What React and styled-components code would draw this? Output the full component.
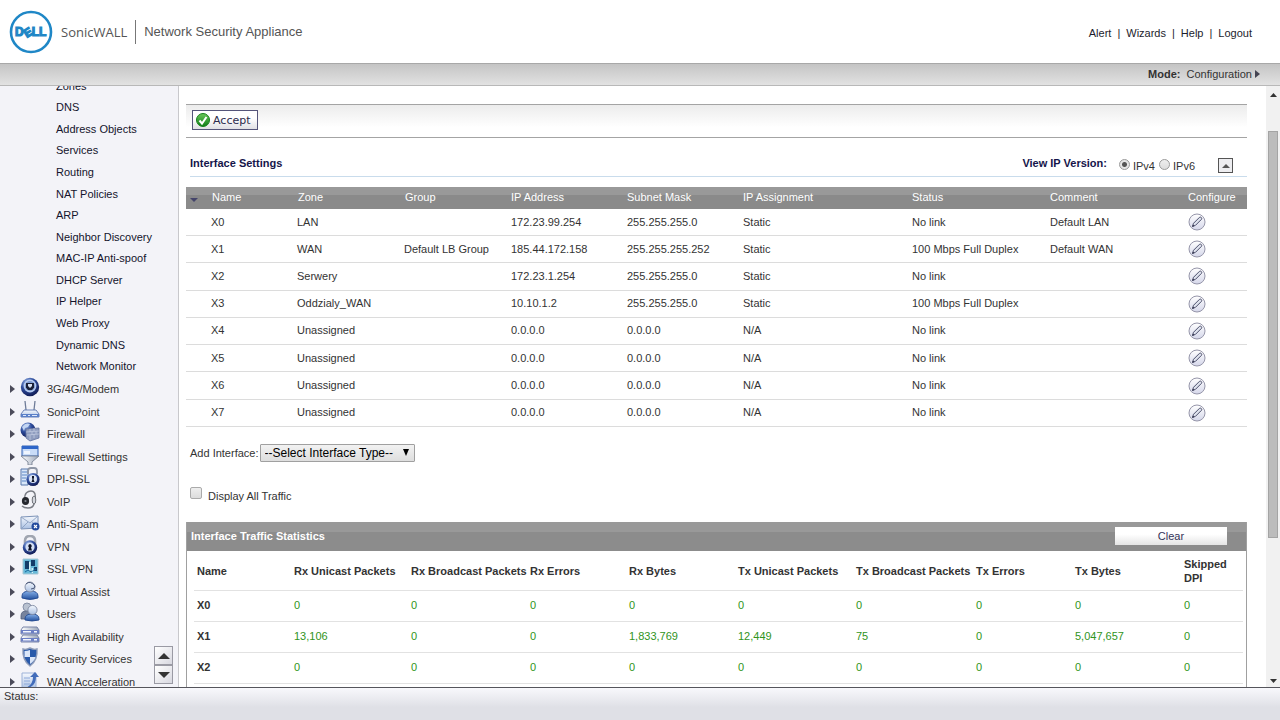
import React from 'react';
import styled, { createGlobalStyle } from 'styled-components';

const subItems = [
  'Zones', 'DNS', 'Address Objects', 'Services', 'Routing', 'NAT Policies', 'ARP',
  'Neighbor Discovery', 'MAC-IP Anti-spoof', 'DHCP Server', 'IP Helper', 'Web Proxy',
  'Dynamic DNS', 'Network Monitor',
];

const icons = {
  camera: (
    <>
      <circle cx="10" cy="10" r="9.2" fill="url(#navy)" />
      <circle cx="10" cy="9" r="6.4" fill="#b9cdf0" />
      <circle cx="10" cy="9" r="5" fill="#7f9bd2" />
      <path d="M6 6h8v4.5l-2 2.5H8l-2-2.5z" fill="#1a2038" />
      <path d="M8 7h4v2l-2 2-2-2z" fill="#d5dff2" />
    </>
  ),
  router: (
    <>
      <path d="M6 10L5 1M14 10l1-9" stroke="#6f7c98" strokeWidth="1.3" />
      <path d="M4 10h12l3 4v3H1v-3z" fill="url(#pale)" stroke="#5c76b0" strokeWidth=".9" />
      <path d="M1 14h18v3H1z" fill="#5b80c8" />
      <path d="M3 15.5h3M8 15.5h2M12 15.5h5" stroke="#dfe9fb" />
    </>
  ),
  firewall: (
    <>
      <circle cx="8" cy="8" r="7.5" fill="url(#navy)" />
      <path d="M2 5c3-4 6-4 8-3l-2 3-3 1-1 3z" fill="#c4d6f3" />
      <path d="M6 7l13-1v10l-9 3-4-3z" fill="#8f9dbf" stroke="#6673a0" strokeWidth=".8" />
      <path d="M6 10l13-1M7 13l12-1M10 7v3M14 6v3M12 10v3M16 9v3M10 13v5M14 12v4" stroke="#c4cde2" strokeWidth=".7" />
    </>
  ),
  funnel: (
    <>
      <path d="M2 1h16v10H2z" fill="#c9dcf8" stroke="#3263b5" />
      <path d="M2 1h16v3H2z" fill="#2e66c9" />
      <path d="M4 6h6v3H4z" fill="#eff5fe" />
      <path d="M1 11h18l-7 6v3H8v-3z" fill="url(#silver)" stroke="#7b8495" strokeWidth=".9" />
    </>
  ),
  dpi: (
    <>
      <path d="M1 2h7v16H1z" fill="#d8e6f8" stroke="#5878ad" />
      <path d="M2 5h5M2 8h5M2 11h4M2 14h4" stroke="#5b86c6" />
      <path d="M8 7V4q0-3 3-3h3q3 0 3 3v3" fill="none" stroke="#8e96a6" strokeWidth="1.8" />
      <circle cx="13" cy="12.5" r="6.6" fill="url(#navy)" />
      <circle cx="13" cy="12" r="4" fill="#dce5f5" />
      <path d="M12 9h2v2l-.5 1 1 3h-3l1-3-.5-1z" fill="#111629" />
    </>
  ),
  headset: (
    <>
      <path d="M5 9C4 3 8 1 11 1c4 0 5 4 4 9l-1 4q-1 4-6 4-4 0-6-2" fill="none" stroke="#7a7d85" strokeWidth="1.4" />
      <ellipse cx="5.5" cy="11" rx="3.6" ry="4" fill="#25272e" />
      <ellipse cx="14" cy="10" rx="1.8" ry="4" fill="#d3d6dd" stroke="#555960" strokeWidth=".8" />
      <circle cx="5.5" cy="11" r="1.1" fill="#81868f" />
    </>
  ),
  mail: (
    <>
      <path d="M1 5l17-1v12l-17 1z" fill="url(#pale)" stroke="#7d93b8" />
      <path d="M1 5l9 6 8-7M1 17l7-7M18 15l-6-5" fill="none" stroke="#8ca0c2" strokeWidth=".9" />
      <circle cx="15.5" cy="14.5" r="4" fill="#244b9d" />
      <path d="M14 13l3 3m0-3l-3 3" stroke="#fff" strokeWidth="1.1" />
    </>
  ),
  lock: (
    <>
      <path d="M5 9V6q0-5 5-5t5 5v3" fill="none" stroke="#a0a5b0" strokeWidth="2.6" />
      <circle cx="10" cy="12.5" r="7.2" fill="url(#navy)" />
      <circle cx="10" cy="12" r="4.6" fill="#d4dff4" />
      <path d="M10 9a2 2 0 0 1 1 3.5l1 3H8l1-3A2 2 0 0 1 10 9z" fill="#0d1226" />
    </>
  ),
  ssl: (
    <>
      <path d="M3 2h15v15H3z" fill="#65b8d8" stroke="#a9c8d5" />
      <path d="M5 4h4v8H5zM11 3h4v6h-4zM14 10h3v4h-3z" fill="#123c69" />
      <path d="M9 5h1.5v9H9zM11.5 11H13v5h-1.5z" fill="#d1f0f7" />
      <path d="M5 15l3-2 3 2 5-3" fill="none" stroke="#1c6b9b" />
    </>
  ),
  assist: (
    <>
      <path d="M2 16q0-5 8-5t8 5v2q-8 3-16 0z" fill="url(#blue)" stroke="#234a91" strokeWidth=".9" />
      <circle cx="10" cy="7" r="5" fill="url(#pale)" stroke="#7e89a2" strokeWidth=".9" />
      <path d="M6 4q4-4 9 2M15 6q0 3-4 3" fill="none" stroke="#4b5878" />
    </>
  ),
  users: (
    <>
      <path d="M1 14q0-5 5-5t5 5v3H1z" fill="#77839d" stroke="#4f5c78" strokeWidth=".8" />
      <circle cx="7" cy="5" r="4" fill="#b8c1d0" stroke="#7e89a2" strokeWidth=".9" />
      <path d="M5 17q0-5 7-5t7 5v1q-7 2-14 0z" fill="url(#blue)" stroke="#234a91" strokeWidth=".9" />
      <circle cx="12.5" cy="8" r="4.6" fill="url(#pale)" stroke="#7e89a2" strokeWidth=".9" />
    </>
  ),
  servers: (
    <>
      <path d="M3 2h14l2 3v4H1V5zM3 10h14l2 3v4H1v-4z" fill="url(#silver)" stroke="#6d7ba2" strokeWidth=".9" />
      <path d="M1 5h18v3.5H1zM1 13h18v3.5H1z" fill="#6c7fc4" />
      <path d="M3 6.7h8M3 14.7h8M14 6.7h3M14 14.7h3" stroke="#f2f5fd" strokeWidth="1.6" />
    </>
  ),
  shield: (
    <>
      <path d="M10 1q4 2 7 1 1 11-7 17Q2 13 3 2q3 1 7-1z" fill="#2859aa" stroke="#8d9bb8" strokeWidth="1.4" />
      <path d="M10 3v7H4.500V4q3 0 5.500-1zM10 10h5.500q-1 4-5.500 7z" fill="#dbe6f8" />
    </>
  ),
  wan: (
    <>
      <path d="M2 3h14v16H2z" fill="url(#pale)" stroke="#9db2d8" />
      <path d="M4 8h6M4 11h6M4 14h6" stroke="#8ea9da" />
      <path d="M3 19q10-3 10-12h-3l5-5 4 5h-3q0 11-13 12z" fill="#426cba" />
    </>
  ),
};

const groups = [
  ['3G/4G/Modem', 'camera'], ['SonicPoint', 'router'], ['Firewall', 'firewall'],
  ['Firewall Settings', 'funnel'], ['DPI-SSL', 'dpi'], ['VoIP', 'headset'],
  ['Anti-Spam', 'mail'], ['VPN', 'lock'], ['SSL VPN', 'ssl'], ['Virtual Assist', 'assist'],
  ['Users', 'users'], ['High Availability', 'servers'], ['Security Services', 'shield'],
  ['WAN Acceleration', 'wan'],
];

const interfaceHeads = ['Name', 'Zone', 'Group', 'IP Address', 'Subnet Mask', 'IP Assignment', 'Status', 'Comment', 'Configure'];
const interfaceCols = [25, 86, 107, 107, 116, 116, 169, 138, 138, 59];
const interfaces = [
  ['X0', 'LAN', '', '172.23.99.254', '255.255.255.0', 'Static', 'No link', 'Default LAN'],
  ['X1', 'WAN', 'Default LB Group', '185.44.172.158', '255.255.255.252', 'Static', '100 Mbps Full Duplex', 'Default WAN'],
  ['X2', 'Serwery', '', '172.23.1.254', '255.255.255.0', 'Static', 'No link', ''],
  ['X3', 'Oddzialy_WAN', '', '10.10.1.2', '255.255.255.0', 'Static', '100 Mbps Full Duplex', ''],
  ['X4', 'Unassigned', '', '0.0.0.0', '0.0.0.0', 'N/A', 'No link', ''],
  ['X5', 'Unassigned', '', '0.0.0.0', '0.0.0.0', 'N/A', 'No link', ''],
  ['X6', 'Unassigned', '', '0.0.0.0', '0.0.0.0', 'N/A', 'No link', ''],
  ['X7', 'Unassigned', '', '0.0.0.0', '0.0.0.0', 'N/A', 'No link', ''],
];

const statHeads = ['Name', 'Rx Unicast Packets', 'Rx Broadcast Packets', 'Rx Errors', 'Rx Bytes', 'Tx Unicast Packets', 'Tx Broadcast Packets', 'Tx Errors', 'Tx Bytes', 'Skipped DPI'];
const statCols = [97, 117, 119, 99, 109, 118, 120, 99, 109, 62];
const stats = [
  ['X0', '0', '0', '0', '0', '0', '0', '0', '0', '0'],
  ['X1', '13,106', '0', '0', '1,833,769', '12,449', '75', '0', '5,047,657', '0'],
  ['X2', '0', '0', '0', '0', '0', '0', '0', '0', '0'],
];

const Arrow = ({ dir, width = 8, height = 5, color = '#333' }) => {
  const d = { up: 'M0 10L5 0l5 10z', down: 'M0 0h10L5 10z', right: 'M0 0l10 5-10 5z' }[dir];
  return (
    <svg width={width} height={height} viewBox="0 0 10 10" preserveAspectRatio="none" aria-hidden="true">
      <path d={d} fill={color} />
    </svg>
  );
};

const App = () => {
  return (
    <>
      <GlobalStyle />
      <Gradients />
      <Page>
        <Header>
          <Brand>
            <svg width="44" height="44" viewBox="0 0 44 44" role="img" aria-label="Dell">
              <circle cx="22" cy="22" r="20" fill="none" stroke="#1f87c6" strokeWidth="2.6" />
              <text x="6" y="26" dx="0 3 -3 0" dy="0 2 -2 0" rotate="0 -32 0 0" fontFamily="Liberation Sans, sans-serif" fontWeight="bold" fontSize="12" fill="#1f87c6" stroke="#1f87c6" strokeWidth="1.2">DELL</text>
            </svg>
            <BrandName>SonicWALL</BrandName>
            <Product>Network Security Appliance</Product>
          </Brand>
          <TopLinks>
            <a href="#alert">Alert</a><span>|</span>
            <a href="#wizards">Wizards</a><span>|</span>
            <a href="#help">Help</a><span>|</span>
            <a href="#logout">Logout</a>
          </TopLinks>
        </Header>
        <ModeBar>
          <b>Mode:</b>
          <a href="#mode">Configuration <Arrow dir="right" width={5} height={8} color="#444452" /></a>
        </ModeBar>
        <Body>
          <Sidebar>
            <SubList>
              {subItems.map((item) => <li key={item}><a href="#sub">{item}</a></li>)}
            </SubList>
            <GroupList>
              {groups.map(([name, icon]) => (
                <li key={name}>
                  <GroupLink href="#group">
                    <Arrow dir="right" width={5} height={8} color="#4b4b5a" />
                    <svg width="20" height="20" viewBox="0 0 20 20" aria-hidden="true">{icons[icon]}</svg>
                    <span>{name}</span>
                  </GroupLink>
                </li>
              ))}
            </GroupList>
            <ScrollButtons>
              <button aria-label="Scroll menu up"><Arrow dir="up" width={12} height={6} /></button>
              <button aria-label="Scroll menu down"><Arrow dir="down" width={12} height={6} /></button>
            </ScrollButtons>
          </Sidebar>
          <Content>
            <Toolbar>
              <AcceptButton>
                <svg width="14" height="14" viewBox="0 0 14 14" aria-hidden="true">
                  <circle cx="7" cy="7" r="6.5" fill="url(#green)" stroke="#16801b" />
                  <path d="M3.5 7.5l2.5 3 4.5-6.5" fill="none" stroke="#fff" strokeWidth="2" />
                </svg>
                Accept
              </AcceptButton>
            </Toolbar>
            <SectionHead>
              <h2>Interface Settings</h2>
              <VersionPicker>
                <b>View IP Version:</b>
                <Radio type="radio" name="ip" id="ipv4" defaultChecked /><label htmlFor="ipv4">IPv4</label>
                <Radio type="radio" name="ip" id="ipv6" /><label htmlFor="ipv6">IPv6</label>
              </VersionPicker>
              <Collapse aria-label="Collapse"><Arrow dir="up" width={8} height={4} color="#555" /></Collapse>
            </SectionHead>
            <InterfaceTable>
              <colgroup>{interfaceCols.map((w, i) => <Col key={i} $w={w} />)}</colgroup>
              <thead>
                <tr>
                  <th><Arrow dir="down" width={8} height={4} color="#44446a" /></th>
                  {interfaceHeads.map((h) => <th key={h}>{h}</th>)}
                </tr>
              </thead>
              <tbody>
                {interfaces.map((row) => (
                  <tr key={row[0]}>
                    <td />
                    {row.map((cell, i) => <td key={i}>{cell}</td>)}
                    <td>
                      <EditButton aria-label={`Configure ${row[0]}`}>
                        <svg width="18" height="18" viewBox="0 0 18 18">
                          <circle cx="9" cy="9" r="8" fill="url(#pale2)" stroke="#9696aa" />
                          <path d="M4.500 13.500l1-3.200 6-6q1-.6 1.800.2t.2 1.800l-6 6z" fill="#dfe3ee" stroke="#4c4f6c" />
                          <path d="M4.300 13.700l.6-2 1.400 1.400z" fill="#22243c" />
                        </svg>
                      </EditButton>
                    </td>
                  </tr>
                ))}
              </tbody>
            </InterfaceTable>
            <AddRow>
              <label htmlFor="add">Add Interface:</label>
              <SelectWrap>
                <select id="add"><option>--Select Interface Type--</option></select>
                <Arrow dir="down" width={6} height={7} color="#000" />
              </SelectWrap>
            </AddRow>
            <TrafficRow>
              <Check type="checkbox" id="all" />
              <label htmlFor="all">Display All Traffic</label>
            </TrafficRow>
            <StatsPanel>
              <StatsHead>
                <h2>Interface Traffic Statistics</h2>
                <ClearButton>Clear</ClearButton>
              </StatsHead>
              <StatsTable>
                <colgroup>{statCols.map((w, i) => <Col key={i} $w={w} />)}</colgroup>
                <thead>
                  <tr>{statHeads.map((h) => <th key={h}>{h}</th>)}</tr>
                </thead>
                <tbody>
                  {stats.map((row) => (
                    <tr key={row[0]}>
                      {row.map((cell, i) => (i === 0 ? <th key={i} scope="row">{cell}</th> : <td key={i}>{cell}</td>))}
                    </tr>
                  ))}
                  <tr><td colSpan={10} /></tr>
                </tbody>
              </StatsTable>
            </StatsPanel>
          </Content>
          <ScrollTrack>
            <Arrow dir="up" width={7} height={4} />
            <ScrollThumb />
            <Arrow dir="down" width={7} height={4} />
          </ScrollTrack>
        </Body>
        <StatusBar>Status:</StatusBar>
      </Page>
    </>
  );
};

const Gradients = () => (
  <Defs aria-hidden="true">
    <defs>
      <radialGradient id="navy" cx=".35" cy=".25" r=".8">
        <stop offset="0" stopColor="#92aee4" /><stop offset=".5" stopColor="#2c4a9a" /><stop offset="1" stopColor="#10184f" />
      </radialGradient>
      <linearGradient id="pale" x2="0" y2="1"><stop stopColor="#f6f9fe" /><stop offset="1" stopColor="#a9bfe2" /></linearGradient>
      <linearGradient id="pale2" x2="0" y2="1"><stop stopColor="#fff" /><stop offset="1" stopColor="#d5d7ea" /></linearGradient>
      <linearGradient id="silver" x2="1" y2="0"><stop stopColor="#fff" /><stop offset="1" stopColor="#9aa5b8" /></linearGradient>
      <linearGradient id="blue" x2="0" y2="1"><stop stopColor="#86b1ea" /><stop offset="1" stopColor="#23509e" /></linearGradient>
      <linearGradient id="green" x2="0" y2="1"><stop stopColor="#6cc85c" /><stop offset="1" stopColor="#0d7d16" /></linearGradient>
    </defs>
  </Defs>
);

const GlobalStyle = createGlobalStyle`
  * { box-sizing: border-box; }
  body {
    margin: 0;
    background: #fff;
    color: #333;
    font: 11px/14px "Liberation Sans", Arial, sans-serif;
  }
  a { color: inherit; text-decoration: none; }
  ul { margin: 0; padding: 0; list-style: none; }
  h2 { margin: 0; font-size: 11px; }
  button, select { font-family: inherit; margin: 0; padding: 0; }
`;

const Defs = styled.svg`
  position: absolute;
  width: 0;
  height: 0;
`;

const Page = styled.div`
  display: flex;
  flex-direction: column;
  height: 100vh;
`;

const Header = styled.header`
  display: flex;
  flex: none;
  align-items: center;
  justify-content: space-between;
  height: 63px;
  padding: 0 28px 0 9px;
`;

const Brand = styled.div`
  display: flex;
  align-items: center;
  color: #555;
`;

const BrandName = styled.span`
  padding: 0 8px;
  border-right: 1px solid #777;
  font: 13px/24px "Open Sans", sans-serif;
`;

const Product = styled.span`
  padding-left: 8px;
  font-size: 13px;
`;

const TopLinks = styled.nav`
  display: flex;
  gap: 6px;
  padding-top: 3px;
  color: #1c1c2c;
`;

const ModeBar = styled.div`
  display: flex;
  flex: none;
  align-items: center;
  justify-content: flex-end;
  gap: 6px;
  height: 23px;
  padding: 0 20px 1px 0;
  border-top: 1px solid #a8a8a8;
  border-bottom: 1px solid #b8b8b8;
  background: linear-gradient(#c4c4c4, #e2e2e2);
`;

const Body = styled.div`
  display: flex;
  flex: 1;
  min-height: 0;
`;

const Sidebar = styled.nav`
  position: relative;
  flex: none;
  width: 179px;
  overflow: hidden;
  border-right: 1px solid #c8c8cc;
  background: #f3f3f8;
`;

const SubList = styled.ul`
  display: grid;
  grid-auto-rows: 1fr;
  align-items: center;
  height: 302px;
  margin-top: -11px;
  padding-left: 56px;
  color: #14142c;
`;

const GroupList = styled.ul`
  display: grid;
  grid-auto-rows: 1fr;
  align-items: center;
  height: 315px;
  margin-top: 1px;
  padding-left: 10px;
`;

const GroupLink = styled.a`
  display: flex;
  align-items: center;
  height: 22px;

  svg + svg {
    margin: 0 7px 4px 5px;
  }
`;

const ScrollButtons = styled.div`
  position: absolute;
  right: 5px;
  bottom: 3px;
  display: grid;

  button {
    display: grid;
    place-items: center;
    width: 19px;
    height: 19px;
    border: 1px solid #9a9aa4;
    background: linear-gradient(135deg, #fff, #d8d8e0);
  }
`;

const Content = styled.main`
  flex: 1;
  min-width: 0;
  overflow: hidden;
  padding: 18px 19px 0 7px;
`;

const Toolbar = styled.div`
  display: flex;
  align-items: center;
  height: 34px;
  padding: 0 0 2px 6px;
  border-top: 1px solid #a4a4a4;
  border-bottom: 1px solid #a4a4a4;
  background: linear-gradient(#ececec, #fff 70%);
`;

const AcceptButton = styled.button`
  display: flex;
  align-items: center;
  gap: 3px;
  height: 20px;
  && { padding: 0 6px 0 3px; }
  border: 1px solid #55557a;
  background: linear-gradient(#fff 40%, #e0e0e4);
  color: #2c2c4c;
  font: 11px "DejaVu Sans", sans-serif;
`;

const SectionHead = styled.div`
  display: flex;
  align-items: center;
  height: 29px;
  margin: 10px 0 10px 4px;
  padding: 2px 14px 0 0;
  border-bottom: 1px solid #c9dcec;
  color: #15154a;

  h2 { flex: 1; }
`;

const VersionPicker = styled.div`
  display: flex;
  align-items: center;
  margin-right: 23px;

  b { margin-right: 12px; }
  input { margin-top: 2px; }
  label { margin: 6px 4px 0 3px; color: #333; }
  label:last-child { margin-right: 0; }
`;

const Radio = styled.input`
  appearance: none;
  width: 11px;
  height: 11px;
  margin: 0;
  border: 1px solid #9a9a9a;
  border-radius: 50%;
  background: linear-gradient(#eee, #ddd);

  &:checked {
    background: radial-gradient(circle, #555 0 2px, #e6e6e6 3px);
  }
`;

const Collapse = styled.button`
  display: grid;
  place-items: center;
  width: 15px;
  height: 15px;
  && { margin-top: 5px; }
  border: 1px solid #555;
  background: #ededf0;
`;

const Col = styled.col`
  width: ${(p) => p.$w}px;
`;

const InterfaceTable = styled.table`
  table-layout: fixed;
  width: 100%;
  height: 240px;
  border-collapse: collapse;

  th, td {
    padding: 0 0 1px;
    text-align: left;
    white-space: nowrap;
  }
  thead tr {
    height: 22px;
    background: linear-gradient(#999 0 8px, #8a8a8a 8px);
    color: #fff;
  }
  th { padding: 0 0 2px 1px; font-weight: normal; }
  th:first-child { padding: 0 0 0 4px; }
  th:nth-child(n + 5) { padding-left: 0; }
  td:last-child { padding: 0; }
  tbody tr { border-bottom: 1px solid #dcdcdc; }
`;

const EditButton = styled.button`
  display: block;
  width: 18px;
  height: 18px;
  border: 0;
  background: none;
`;

const AddRow = styled.div`
  display: flex;
  align-items: center;
  gap: 1px;
  margin: 17px 0 0 4px;
`;

const SelectWrap = styled.div`
  position: relative;

  select {
    appearance: none;
    display: block;
    width: 155px;
    height: 18px;
    padding-left: 4px;
    border: 1px solid #a0a0a0;
    border-radius: 1px;
    background: linear-gradient(#f2f2f2, #dedede);
    color: #000;
    font-size: 12px;
  }
  svg {
    position: absolute;
    top: 5px;
    right: 6px;
    pointer-events: none;
  }
`;

const TrafficRow = styled.div`
  display: flex;
  gap: 6px;
  margin: 25px 0 19px 4px;

  label { padding-top: 2px; }
`;

const Check = styled.input`
  appearance: none;
  width: 12px;
  height: 12px;
  margin: 0;
  border: 1px solid #aaa;
  border-radius: 2px;
  background: linear-gradient(#eee, #dcdcdc);
`;

const StatsPanel = styled.section`
  border: 1px solid #a0a0a0;
  border-top: 0;
`;

const StatsHead = styled.div`
  display: flex;
  align-items: center;
  justify-content: space-between;
  height: 29px;
  padding: 0 19px 2px 4px;
  background: linear-gradient(#999 0 10px, #8c8c8c 10px);
  color: #fff;
`;

const ClearButton = styled.button`
  width: 112px;
  height: 18px;
  border: 0;
  background: linear-gradient(#fff 40%, #e4e4e4);
  color: #34345a;
  font-size: 11px;
`;

const StatsTable = styled.table`
  table-layout: fixed;
  width: calc(100% - 10px);
  margin: 0 3px 0 7px;
  border-collapse: collapse;

  th, td {
    padding: 0 0 2px 3px;
    text-align: left;
  }
  tr { height: 31px; border-bottom: 1px solid #e2e2e2; }
  thead tr { height: 39px; }
  thead th { padding: 1px 0 0 3px; }
  td { color: #30941c; }
`;

const ScrollTrack = styled.div`
  display: flex;
  flex: none;
  flex-direction: column;
  align-items: center;
  justify-content: space-between;
  width: 14px;
  padding: 7px 0 4px;
  background: #f1f1f1;
`;

const ScrollThumb = styled.div`
  width: 10px;
  height: 69%;
  margin-bottom: 107px;
  border: 1px solid #a4a4a4;
  background: #bcbcbc;
`;

const StatusBar = styled.footer`
  flex: none;
  height: 33px;
  padding: 1px 4px;
  border-top: 1px solid #55555c;
  background: linear-gradient(#f8f8fc, #dfe0e6 60%);
`;

export default App;
